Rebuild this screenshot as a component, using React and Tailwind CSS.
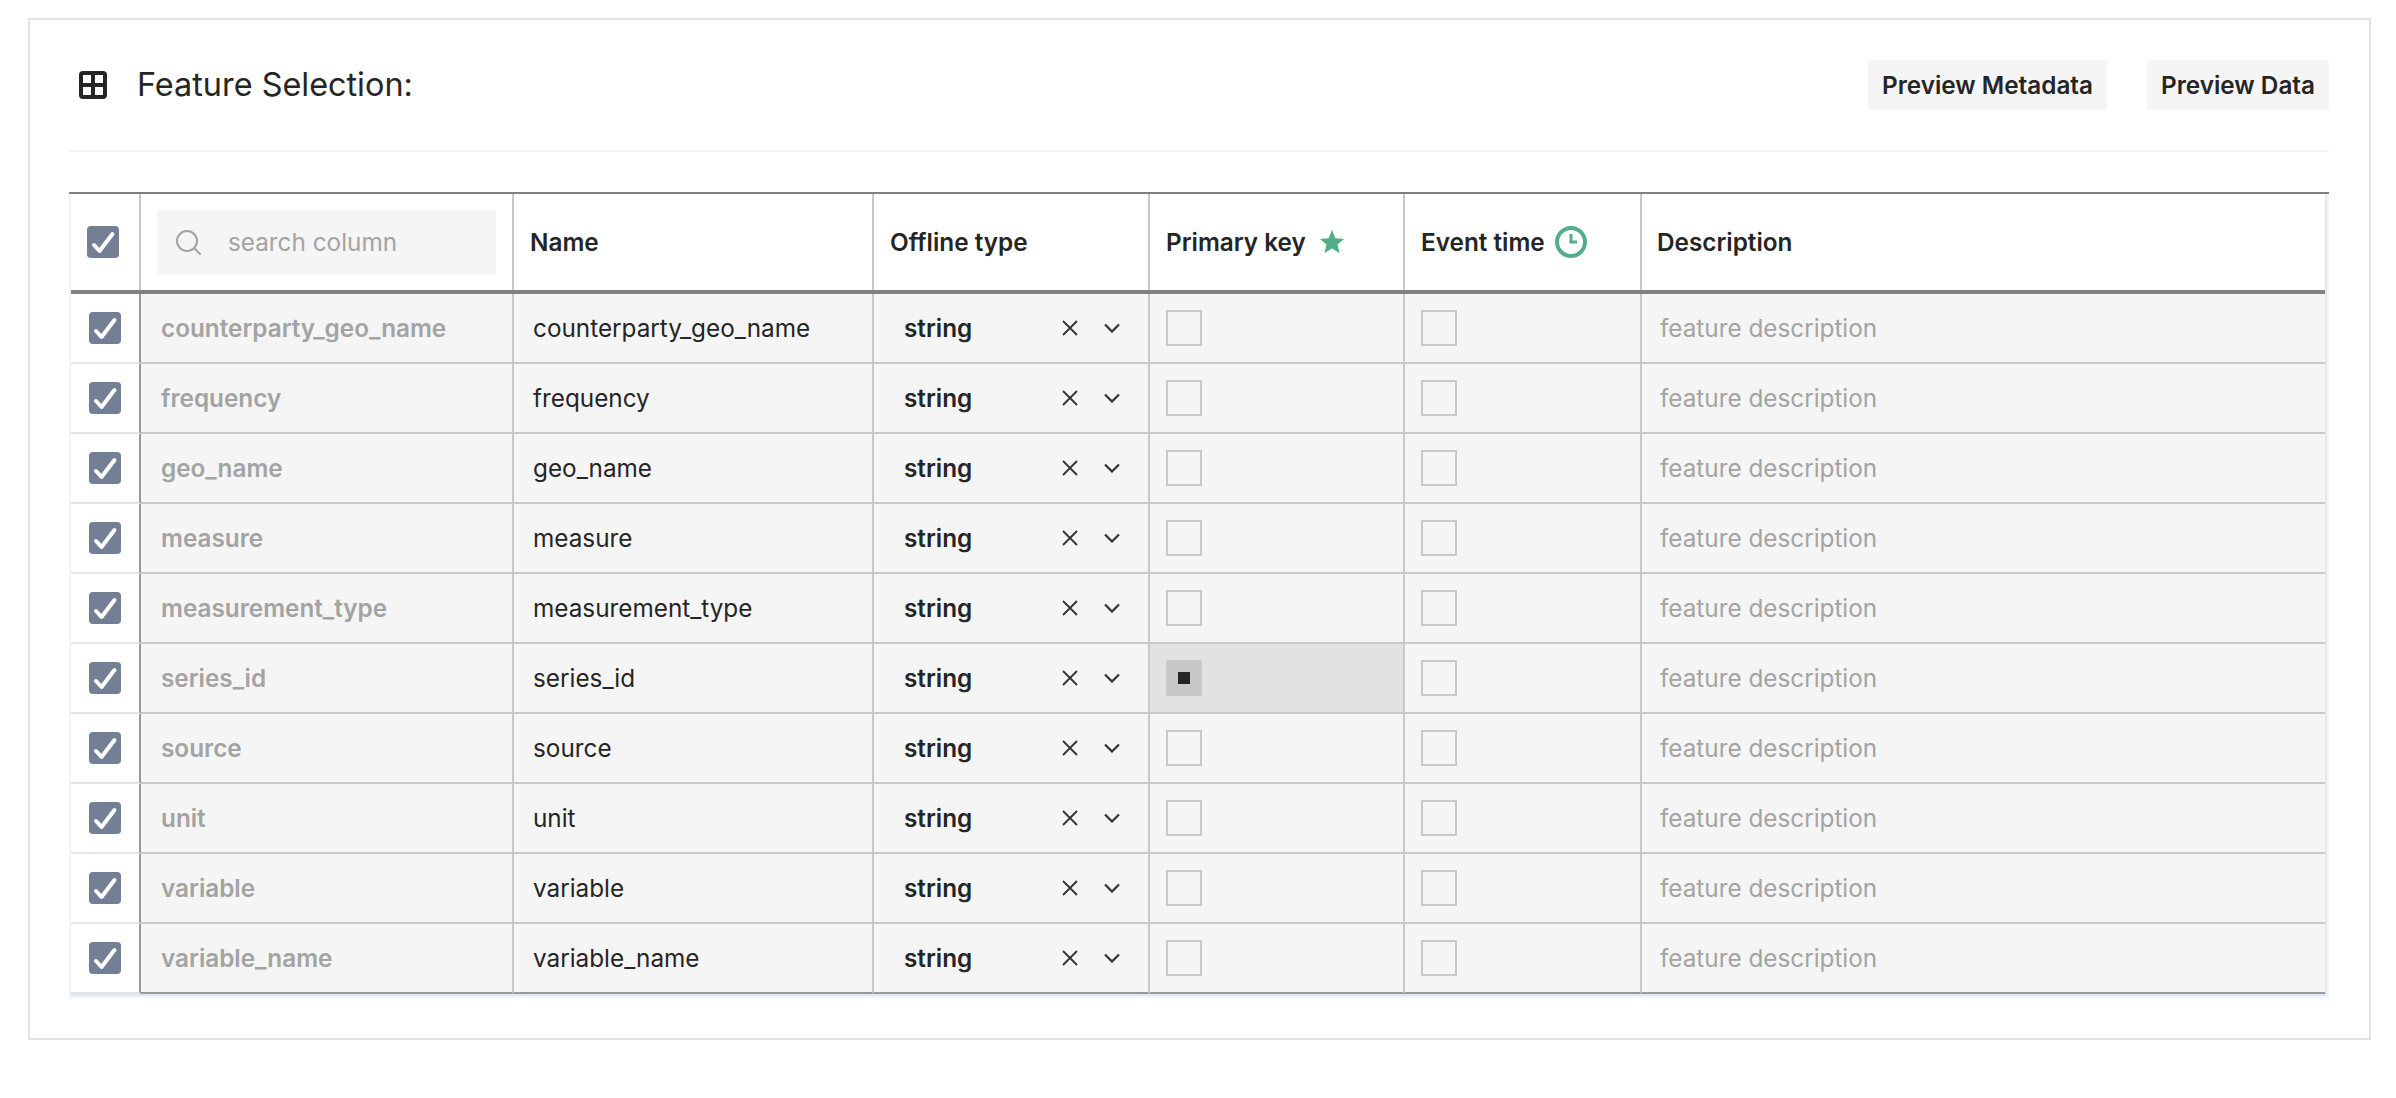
import React from "react";

const rows = [
  "counterparty_geo_name",
  "frequency",
  "geo_name",
  "measure",
  "measurement_type",
  "series_id",
  "source",
  "unit",
  "variable",
  "variable_name",
];

const CheckBox = () => (
  <div className="w-8 h-8 rounded-[4px] bg-[#737f94] flex items-center justify-center">
    <svg width="32" height="32" viewBox="0 0 32 32" fill="none">
      <path d="M7 19l5.5 6L25.5 8" stroke="#fff" strokeWidth="4" strokeLinecap="round" strokeLinejoin="round" />
    </svg>
  </div>
);

const Box = ({ active }) =>
  active ? (
    <div className="w-9 h-9 bg-[#c8c8c8] flex items-center justify-center">
      <div className="w-3 h-3 bg-[#252525]" />
    </div>
  ) : (
    <div className="w-9 h-9 border-2 border-[#c8c8c8]" />
  );

const gridCols = "grid grid-cols-[70px_373px_360px_276px_255px_237px_683px]";

const App = () => {
  return (
    <div className="w-[2396px] h-[1098px] bg-white pt-[18px] pl-[28px] font-[Inter,sans-serif] text-[24.3px] text-[#252525]">
      <div className="w-[2343px] border-2 border-[#e2e2e2] pl-[39px] pr-[40px] pb-10">
        {/* Header */}
        <div className="h-[132px] border-b-2 border-[#f1f5f9] flex items-center justify-between">
          <div className="flex items-center pl-[10px] gap-[30px]">
            <svg width="28" height="28" viewBox="0 0 28 28" fill="none" stroke="#252525" strokeWidth="4">
              <rect x="2" y="2" width="24" height="24" rx="2" />
              <path d="M14 2v24M2 14h24" />
            </svg>
            <span className="text-[32.4px] leading-none text-[#252525]">Feature Selection:</span>
          </div>
          <div className="flex gap-10">
            <button className="h-[50px] w-[239px] bg-[#f5f5f5] rounded-[2px] font-semibold text-center">
              Preview Metadata
            </button>
            <button className="h-[50px] w-[182px] bg-[#f5f5f5] rounded-[2px] font-semibold text-center">
              Preview Data
            </button>
          </div>
        </div>

        {/* Table */}
        <div className="mt-10 w-[2260px] border-x-2 border-b-2 border-[#f1f5f9]">
          <div className="-mx-[2px] h-[2px] bg-[#808080]" />
          <div className="border-r-2 border-b-2 border-[#e2e8f0]">
            <div className={`${gridCols} h-[100px] border-b-4 border-[#808080] font-semibold`}>
              <div className="border-r-2 border-[#c8c8c8] flex items-center pl-4">
                <CheckBox />
              </div>
              <div className="border-r-2 border-[#c8c8c8] flex items-center pl-4">
                <div className="w-[339px] h-16 bg-[#f5f5f5] flex items-center pl-[19px] gap-[27px] font-normal text-[#a3a3a3]">
                  <svg width="25" height="25" viewBox="0 0 25 25" fill="none" stroke="#a3a3a3" strokeWidth="2" strokeLinecap="round">
                    <circle cx="11" cy="11" r="10" />
                    <path d="M18.5 18.5L24 24" />
                  </svg>
                  search column
                </div>
              </div>
              <div className="border-r-2 border-[#c8c8c8] flex items-center pl-4">Name</div>
              <div className="border-r-2 border-[#c8c8c8] flex items-center pl-4">Offline type</div>
              <div className="border-r-2 border-[#c8c8c8] flex items-center pl-4 gap-[14px]">
                Primary key
                <svg width="24" height="24" viewBox="0 0 24 24" fill="#52ae86">
                  <path d="M12 0l3.400 8.200 8.600.7-6.500 5.700 2 8.400L12 18.500 4.500 23l2-8.400L0 8.900l8.600-.7z" />
                </svg>
              </div>
              <div className="border-r-2 border-[#c8c8c8] flex items-center pl-4 gap-[10px]">
                Event time
                <svg width="32" height="32" viewBox="0 0 32 32" fill="none" stroke="#52ae86">
                  <circle cx="16" cy="16" r="14" strokeWidth="4" />
                  <path d="M16 8v8h6" strokeWidth="3" />
                </svg>
              </div>
              <div className="flex items-center pl-[15px]">Description</div>
            </div>

            {rows.map((name, i) => {
              const line = i === 9 ? "border-b-[#999999]" : "border-b-[#c8c8c8]";
              return (
                <div key={name} className={`${gridCols} h-[70px]`}>
                  <div className="border-r-2 border-r-[#999999] border-b-2 border-b-[#e4e4e4] flex items-center pl-[18px]">
                    <CheckBox />
                  </div>
                  <div className={`bg-[#f5f5f5] border-r-2 border-r-[#c8c8c8] border-b-2 flex items-center pl-5 font-semibold text-[#a3a3a3] ${line}`}>
                    {name}
                  </div>
                  <div className={`bg-[#f5f5f5] border-r-2 border-r-[#c8c8c8] border-b-2 flex items-center pl-[19px] ${line}`}>
                    {name}
                  </div>
                  <div className={`bg-[#f5f5f5] border-r-2 border-r-[#c8c8c8] border-b-2 flex items-center pl-[30px] font-semibold ${line}`}>
                    <span className="w-[158px]">string</span>
                    <svg width="16" height="16" viewBox="0 0 16 16" fill="none" stroke="#333333" strokeWidth="1.800">
                      <path d="M1 1l14 14M15 1L1 15" />
                    </svg>
                    <svg className="ml-[26px]" width="16" height="10" viewBox="0 0 16 10" fill="none" stroke="#333333" strokeWidth="2.200">
                      <path d="M1 1.500l7 7 7-7" />
                    </svg>
                  </div>
                  <div className={`border-r-2 border-r-[#c8c8c8] border-b-2 flex items-center pl-4 ${i === 5 ? "bg-[#e2e2e2]" : "bg-[#f5f5f5]"} ${line}`}>
                    <Box active={i === 5} />
                  </div>
                  <div className={`bg-[#f5f5f5] border-r-2 border-r-[#c8c8c8] border-b-2 flex items-center pl-4 ${line}`}>
                    <Box />
                  </div>
                  <div className={`bg-[#f5f5f5] border-b-2 flex items-center pl-[18px] text-[#a3a3a3] ${line}`}>
                    feature description
                  </div>
                </div>
              );
            })}
          </div>
        </div>
      </div>
    </div>
  );
};

export default App;
